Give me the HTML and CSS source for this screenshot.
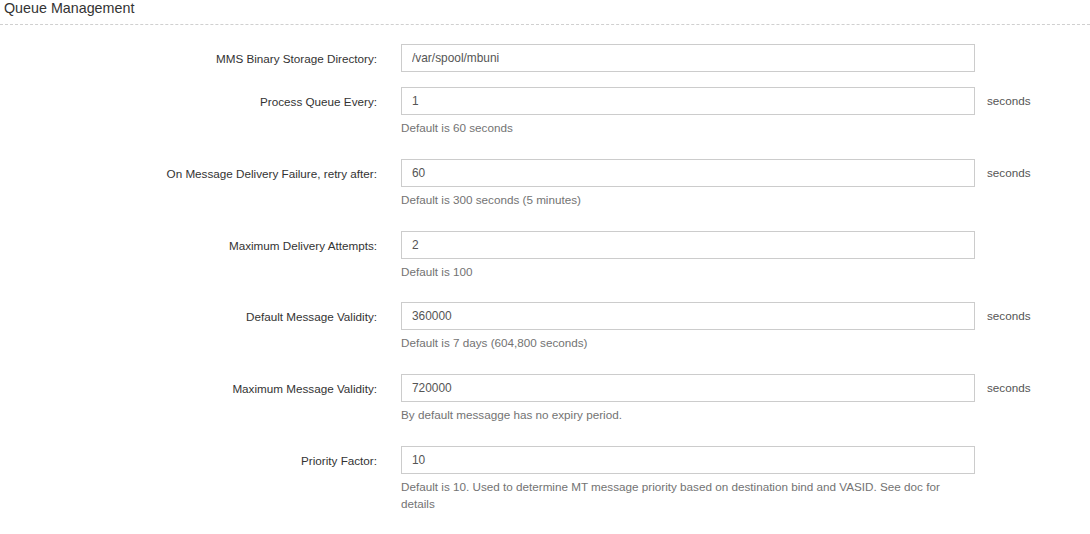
FILE: index.html
```html
<!DOCTYPE html>
<html>
<head>
<meta charset="utf-8">
<link rel="stylesheet" href="styles.css">
</head>
<body>
<div class="page">
  <div class="section-title">Queue Management</div>
  <form class="form">
    <div class="row">
      <label class="label">MMS Binary Storage Directory:</label>
      <div class="field"><input class="input" type="text" value="/var/spool/mbuni"></div>
      <div class="suffix"></div>
    </div>
    <div class="row">
      <label class="label">Process Queue Every:</label>
      <div class="field"><input class="input" type="text" value="1"><p class="help">Default is 60 seconds</p></div>
      <div class="suffix">seconds</div>
    </div>
    <div class="row">
      <label class="label">On Message Delivery Failure, retry after:</label>
      <div class="field"><input class="input" type="text" value="60"><p class="help">Default is 300 seconds (5 minutes)</p></div>
      <div class="suffix">seconds</div>
    </div>
    <div class="row">
      <label class="label">Maximum Delivery Attempts:</label>
      <div class="field"><input class="input" type="text" value="2"><p class="help">Default is 100</p></div>
      <div class="suffix"></div>
    </div>
    <div class="row">
      <label class="label">Default Message Validity:</label>
      <div class="field"><input class="input" type="text" value="360000"><p class="help">Default is 7 days (604,800 seconds)</p></div>
      <div class="suffix">seconds</div>
    </div>
    <div class="row">
      <label class="label">Maximum Message Validity:</label>
      <div class="field"><input class="input" type="text" value="720000"><p class="help">By default messagge has no expiry period.</p></div>
      <div class="suffix">seconds</div>
    </div>
    <div class="row">
      <label class="label">Priority Factor:</label>
      <div class="field"><input class="input" type="text" value="10"><p class="help">Default is 10. Used to determine MT message priority based on destination bind and VASID. See doc for details</p></div>
      <div class="suffix"></div>
    </div>
  </form>
</div>
</body>
</html>
```
FILE: styles.css
```css
html, body {
  margin: 0;
  padding: 0;
  background: #fff;
}
body {
  font-family: "Liberation Sans", Arial, sans-serif;
  font-size: 11.7px;
  color: #333;
}
.page {
  width: 1090px;
}
.section-title {
  font-size: 14.3px;
  color: #333;
  padding: 0 0 0 4px;
  height: 18px;
  line-height: 17px;
  padding-bottom: 6px;
  border-bottom: 1px dashed #d0d0d0;
}
.form {
  margin: 19px 0 0 0;
}
.row {
  display: grid;
  grid-template-columns: 377px 574px 1fr;
  column-gap: 24px;
  margin-bottom: 15px;
}
.row .suffix {
  margin-left: -12px;
  padding-top: 5px;
  color: #555;
  line-height: 17px;
}
.label {
  text-align: right;
  padding-top: 6px;
  line-height: 17px;
  color: #333;
}
.field {
  display: flex;
  flex-direction: column;
}
.input {
  box-sizing: border-box;
  width: 574px;
  height: 28px;
  margin: 0;
  padding: 4px 10px;
  border: 1px solid #ccc;
  border-radius: 0;
  font-family: "Liberation Sans", Arial, sans-serif;
  font-size: 11.9px;
  color: #555;
  background: #fff;
  outline: none;
}
.help {
  margin: 4px 0 7.8px 0;
  line-height: 17px;
  color: #737373;
  font-size: 11.7px;
}
```
